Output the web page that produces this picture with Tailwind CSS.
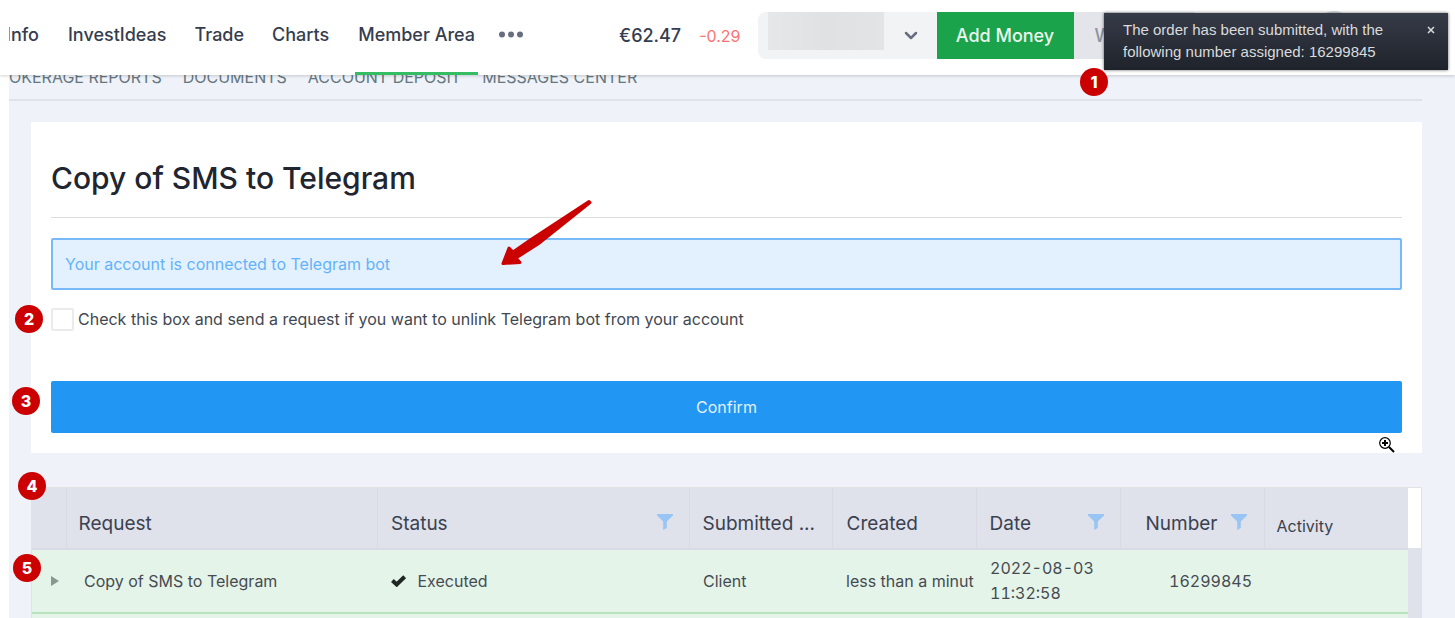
<!DOCTYPE html>
<html lang="en">
<head>
<meta charset="utf-8">
<meta name="viewport" content="width=device-width, initial-scale=1">
<title>Copy of SMS to Telegram</title>
<script src="https://cdn.jsdelivr.net/npm/@tailwindcss/browser@4"></script>
</head>
<body class="bg-white font-['Inter','Liberation_Sans',sans-serif] text-[#454b52]">
<div class="relative min-h-screen overflow-hidden pl-[9px]">

  <header class="relative z-10 -ml-[9px] flex h-[75px] items-start bg-white pl-[9px] shadow-[0_1px_3px_rgba(0,0,0,0.18)]">
    <nav aria-label="Main" class="flex h-[75px] shrink-0 items-stretch overflow-hidden text-lg font-medium text-[#363d4e]">
      <a href="#" class="-ml-[3px] mr-[15px] flex items-center pb-[6px]">Info</a>
      <a href="#" class="flex items-center px-[14px] pb-[6px]">InvestIdeas</a>
      <a href="#" class="flex items-center px-[14px] pb-[6px]">Trade</a>
      <a href="#" class="flex items-center px-[14px] pb-[6px]">Charts</a>
      <a href="#" class="ml-3 flex items-center border-b-[3px] border-[#35bd63] px-[3px] pb-[3px]">Member Area</a>
      <button type="button" aria-label="More" class="ml-[20px] flex items-center pb-[7px]">
        <svg class="h-[7px] w-[26px]" viewBox="0 0 26 7" fill="#666e7f"><circle cx="4" cy="3.500" r="3"/><circle cx="13" cy="3.500" r="3"/><circle cx="22" cy="3.500" r="3"/></svg>
      </button>
    </nav>
    <p class="ml-[95px] flex h-[71px] shrink-0 items-center text-lg font-medium text-[#363d4e]">€62.47<span class="ml-[18px] text-base font-normal text-[#fb7474]">-0.29</span></p>
    <div class="ml-[17px] mt-3 flex h-[47px] min-w-0 grow">
      <button type="button" aria-label="Select account" class="flex h-[47px] w-[179px] shrink-0 items-start rounded-l-lg bg-[#f2f3f5] pl-2.5">
        <span class="h-[38px] w-[116px] bg-linear-to-r from-[#e6e7e9] via-[#e0e1e3] to-[#e3e4e6]"></span>
        <svg class="ml-5 mt-[19px] h-2.5 w-[14px]" viewBox="0 0 14 10" fill="none" stroke="#666e7f" stroke-width="2.500" stroke-linecap="round" stroke-linejoin="round"><path d="M2 2l5 5 5-5"/></svg>
      </button>
      <button type="button" class="w-[137px] shrink-0 bg-[#1ba34b] text-lg font-medium text-[#eaf6ee]">Add Money</button>
      <button type="button" class="w-[120px] shrink-0 bg-[#e4e5ea] pl-[21px] text-left text-lg font-medium text-[#8c94a4]">Withdraw</button>
      <span class="-mt-px ml-[122px] size-9 shrink-0 rounded-full bg-[#dcdee3]"></span>
    </div>
  </header>

  <main class="min-h-[543px] bg-[#eff2f9] pl-[22px] pr-[33px]">
    <nav aria-label="Member area" class="-ml-[22px] flex h-[26px] items-start gap-[21px] overflow-hidden border-b-2 border-[#dfe2e8] text-base leading-4 whitespace-nowrap text-[#65777f]">
      <a href="#" class="-mt-1.5">OKERAGE REPORTS</a>
      <a href="#" class="-mt-1.5">DOCUMENTS</a>
      <a href="#" class="-mt-1.5">ACCOUNT DEPOSIT</a>
      <a href="#" class="-mt-1.5">MESSAGES CENTER</a>
    </nav>

    <form class="mt-[21px] bg-white px-5 pt-[37px] pb-5">
      <h1 class="border-b border-[#dedede] pb-[19px] text-3xl leading-[39px] font-medium text-[#20252f]">Copy of SMS to Telegram</h1>
      <p class="mt-5 flex h-[52px] items-center rounded-xs border-2 border-[#78b9f8] bg-[#e3f1fe] px-3 text-base text-[#64b3fa]">Your account is connected to Telegram bot</p>
      <label class="mt-[17px] flex h-6 items-center gap-1 text-base text-[#414751]">
        <input type="checkbox" class="size-[23px] shrink-0 appearance-none rounded-xs border-2 border-[#ebebeb] bg-white checked:bg-[#2196f3]">
        Check this box and send a request if you want to unlink Telegram bot from your account
      </label>
      <button type="button" class="mt-[50px] block h-[52px] w-full rounded-xs bg-[#2196f3] text-base text-[#e2f1fd]">Confirm</button>
    </form>

    <div class="mt-[34px] flex border-x border-t border-[#e3e2e2] bg-[#dfe2eb]">
      <div class="min-w-0 flex-1">
      <table class="w-full table-fixed border-collapse text-left text-base">
        <colgroup>
          <col class="w-[34px]"><col><col><col class="w-[143px]"><col class="w-[144px]"><col class="w-[144px]"><col class="w-[144px]"><col class="w-[144px]">
        </colgroup>
        <thead class="bg-[#dfe2eb] text-[19px] text-[#3b4150]">
          <tr class="h-[61px] border-b-2 border-[#d8dbe5]">
            <th scope="col" class="border-r border-[#d8dbe5]" aria-label="Expand"></th>
            <th scope="col" class="border-r border-[#d8dbe5] px-3 pt-3 font-normal">Request</th>
            <th scope="col" class="border-r border-[#d8dbe5] px-[13px] pt-3 font-normal"><div class="flex items-center justify-between pr-[3px]">Status
              <svg class="mb-1 size-4" viewBox="0 0 16 16" fill="#98c5f3"><path d="M0 0h16v1.500L9.800 7.500V14l-3.600 2V7.500L0 1.500z"/></svg></div></th>
            <th scope="col" class="border-r border-[#d8dbe5] pt-3 pl-[13px] font-normal whitespace-nowrap">Submitted ...</th>
            <th scope="col" class="border-r border-[#d8dbe5] px-[14px] pt-3 font-normal">Created</th>
            <th scope="col" class="border-r border-[#d8dbe5] px-[13px] pt-3 font-normal"><div class="flex items-center justify-between pr-[3px]">Date
              <svg class="mb-1 size-4" viewBox="0 0 16 16" fill="#98c5f3"><path d="M0 0h16v1.500L9.800 7.500V14l-3.600 2V7.500L0 1.500z"/></svg></div></th>
            <th scope="col" class="border-r border-[#d8dbe5] px-[13px] pt-3 font-normal"><div class="flex items-center justify-end gap-[13px] pr-1">Number
              <svg class="mb-1 size-4" viewBox="0 0 16 16" fill="#98c5f3"><path d="M0 0h16v1.500L9.800 7.500V14l-3.600 2V7.500L0 1.500z"/></svg></div></th>
            <th scope="col" class="px-3 pt-[15px] text-base font-normal">Activity</th>
          </tr>
        </thead>
        <tbody class="bg-[#e5f4e8]">
          <tr class="h-[64px] border-b-2 border-[#b9e3bd]">
            <td class="pl-[19px]"><button type="button" aria-label="Expand row" class="block"><svg class="h-2.5 w-2" viewBox="0 0 8 10" fill="#8b9690"><path d="M0 0l8 5-8 5z"/></svg></button></td>
            <td class="pl-[18px]">Copy of SMS to Telegram</td>
            <td class="px-[13px]"><div class="flex items-center gap-3"><svg class="h-3 w-[15px]" viewBox="0 0 15 12" fill="none" stroke="#202622" stroke-width="4"><path d="M1.400 5.500l4.300 4L13.600 1.700"/></svg>Executed</div></td>
            <td class="px-[14px]">Client</td>
            <td class="overflow-hidden pl-[14px] whitespace-nowrap">less than a minut</td>
            <td class="pl-[14px] leading-[25px] tabular-nums">2022-08-03<br>11:32:58</td>
            <td class="pr-3 text-right tabular-nums">16299845</td>
            <td></td>
          </tr>
          <tr class="h-1.5"><td colspan="8"></td></tr>
        </tbody>
      </table>
      </div>
      <div class="h-[60px] w-[13px] shrink-0 bg-white"></div>
    </div>
  </main>

  <div role="status" class="absolute top-[13px] right-[7px] z-20 flex h-[57px] w-[344px] items-start justify-between bg-linear-to-b from-[#363b48] to-[#1f232b] pt-1.5 pr-3 pl-[19px] font-['Liberation_Sans',sans-serif] text-[15px] leading-[22px] text-[#dadbdd] shadow-[0_0_3px_rgba(0,0,0,0.6)]">
    <p class="w-[280px]">The order has been submitted, with the following number assigned: 16299845</p>
    <button type="button" aria-label="Close" class="mt-[6px]"><svg class="size-2.5" viewBox="0 0 10 10" stroke="#dadbdd" stroke-width="1.500"><path d="M2 2l6 6M8 2l-6 6"/></svg></button>
  </div>

  <span class="absolute top-[68px] left-[1080px] z-30 flex size-7 items-center justify-center rounded-full bg-[#cb0000] text-base font-extrabold text-white">1</span>
  <span class="absolute top-[305px] left-[15px] z-30 flex size-7 items-center justify-center rounded-full bg-[#cb0000] text-base font-extrabold text-white">2</span>
  <span class="absolute top-[387px] left-3 z-30 flex size-7 items-center justify-center rounded-full bg-[#cb0000] text-base font-extrabold text-white">3</span>
  <span class="absolute top-[472px] left-[18px] z-30 flex size-7 items-center justify-center rounded-full bg-[#cb0000] text-base font-extrabold text-white">4</span>
  <span class="absolute top-[554px] left-[13px] z-30 flex size-7 items-center justify-center rounded-full bg-[#cb0000] text-base font-extrabold text-white">5</span>

  <svg class="absolute top-[195px] left-[495px] z-30 h-[75px] w-[100px]" viewBox="0 0 100 75" fill="#cb0000" stroke="#cb0000" stroke-width="3" stroke-linejoin="round" aria-hidden="true"><path d="M94 6.500L36 44.500 18 57 14 53 8 68.500 25 67.500 21 63 43 49 95 7.500z"/></svg>

  <svg class="absolute top-[437px] left-[1379px] z-30 size-4" viewBox="0 0 16 16" aria-hidden="true"><circle cx="6" cy="6" r="5.300" fill="#fff" stroke="#000" stroke-width="1.200"/><path d="M6 3v6M3 6h6" stroke="#000" stroke-width="2"/><path d="M10 10l5 5" stroke="#000" stroke-width="2"/></svg>
</div>
</body>
</html>
